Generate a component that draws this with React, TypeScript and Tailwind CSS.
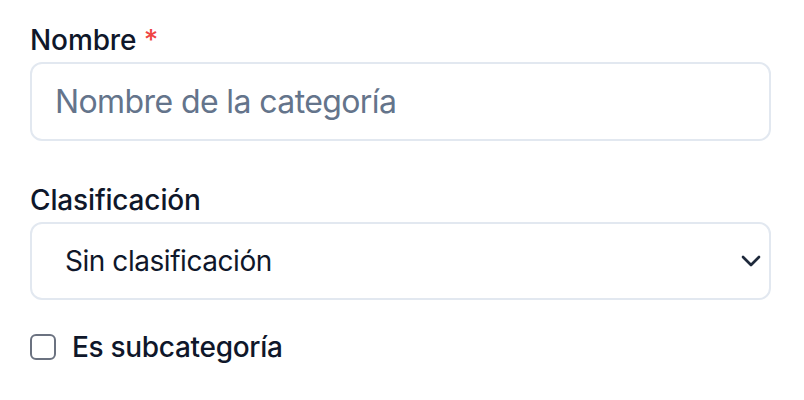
import { useState } from "react";

export default function App() {
  const [sub, setSub] = useState(false);

  return (
    <div className="min-h-screen bg-white font-['Inter','Liberation_Sans',sans-serif]">
      <form className="flex w-[771px] flex-col pl-[30px] pt-[20px]">
        {/* Nombre */}
        <label className="block h-[40px] text-[28px] leading-[40px] font-medium tracking-[-0.1px] text-[#0f172a]">
          Nombre <span className="text-[#ef4444]">*</span>
        </label>
        <input
          type="text"
          placeholder="Nombre de la categoría"
          className="mt-[2px] h-[79px] w-full rounded-[12px] border-2 border-[#e2e8f0] bg-white px-[23px] text-[32px] tracking-[-0.6px] text-[#0f172a] outline-none placeholder:text-[#64748b]"
        />

        {/* Clasificación */}
        <label className="mt-[39px] block h-[40px] text-[28px] leading-[40px] font-medium tracking-[-0.15px] text-[#0f172a]">
          Clasificación
        </label>
        <div className="relative mt-[2px]">
          <select className="h-[78px] w-full appearance-none rounded-[12px] border-2 border-[#e2e8f0] bg-white pl-[33px] text-[28px] tracking-[-0.45px] text-[#0f172a] outline-none">
            <option>Sin clasificación</option>
          </select>
          <svg
            viewBox="0 0 24 24"
            className="pointer-events-none absolute top-1/2 right-[4px] h-[32px] w-[32px] -translate-y-1/2 text-[#1e293b]"
            fill="none"
            stroke="currentColor"
            strokeWidth="2"
            strokeLinecap="round"
            strokeLinejoin="round"
          >
            <path d="m6 9 6 6 6-6" />
          </svg>
        </div>

        {/* Es subcategoría */}
        <label className="mt-[24px] flex h-[46px] items-center gap-[16px] text-[28px] font-medium tracking-[-0.3px] text-[#0f172a]">
          <input
            type="checkbox"
            checked={sub}
            onChange={(e) => setSub(e.target.checked)}
            className="h-[26px] w-[26px] appearance-none rounded-[6px] border-2 border-[#6b7280] bg-white"
          />
          Es subcategoría
        </label>
      </form>
    </div>
  );
}
